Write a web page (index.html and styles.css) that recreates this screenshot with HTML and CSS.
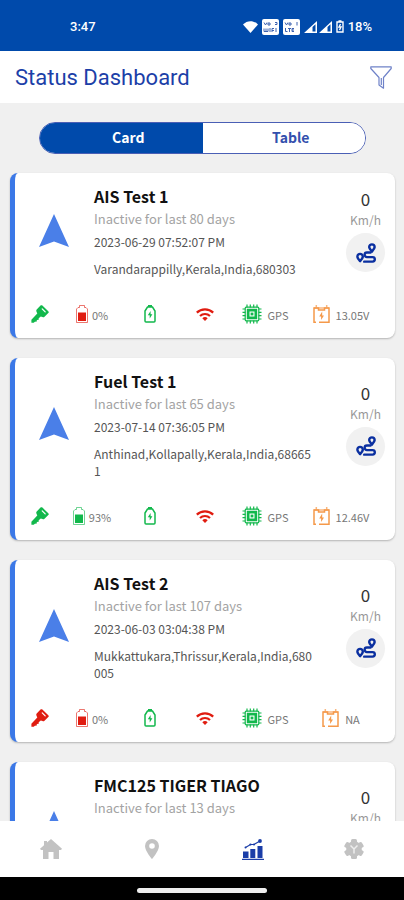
FILE: index.html
```html
<!DOCTYPE html>
<html lang="en">
<head>
  <meta charset="UTF-8">
  <meta name="viewport" content="width=device-width, initial-scale=1.0">
  <title>Status Dashboard</title>
  <link rel="stylesheet" href="styles.css">
</head>
<body>
  <!-- Shared icons -->
  <svg class="sprite" aria-hidden="true">
    <symbol id="arrow" viewBox="0 0 30 33">
      <path fill="#4a7fe8" d="M15 0 30 33 15 27.500 0 33z"/>
    </symbol>
    <symbol id="route" viewBox="0 0 22 22">
      <g fill="none" stroke="#0a2fa0" stroke-width="2.600" stroke-linecap="round" stroke-linejoin="round">
        <path d="M16 10.500h-4a2.500 2.500 0 0 0 0 5h6.200a2.500 2.500 0 0 1 0 5H9"/>
        <path d="M17.500 9.500c-2-2.400-3-3.600-3-5a3 3 0 0 1 6 0c0 1.400-1 2.600-3 5z"/>
        <path d="M4.500 20c-2-2.400-3-3.600-3-5a3 3 0 0 1 6 0c0 1.400-1 2.600-3 5z"/>
      </g>
    </symbol>
    <symbol id="key" viewBox="0 0 18 18">
      <path fill="currentColor" d="M9.500.6c.6-.5 1.300-.5 1.900 0l5.900 5.600c.6.600.6 1.300 0 1.900l-3.800 3.700c-.6.600-1.300.7-2 .3L9.800 11.400 7.700 13.300v1.400l-1.900.2v1.700l-1.900.1L2.700 17.700H.4v-3L6.300 8.500l-.9-2.100c-.3-.7-.2-1.400.3-1.900z"/>
      <path stroke="#fff" stroke-width="1.200" stroke-linecap="round" d="m11.200 3.800 3 3"/>
    </symbol>
    <symbol id="fuel" viewBox="0 0 12 18">
      <path fill="none" stroke="currentColor" opacity=".6" d="M3.500 2.500v-2h5v2h1.500l1.500 1.500v13.500H.5V4L2 2.500z"/>
      <path fill="currentColor" d="M2 7.500h8V16H2z"/>
    </symbol>
    <symbol id="charge" viewBox="0 0 12 18">
      <path fill="none" stroke="currentColor" stroke-width="1.500" d="M1 6 3.500 2h5L11 6v10a1 1 0 0 1-1 1H2a1 1 0 0 1-1-1z"/>
      <path fill="currentColor" d="M4 0h4v2H4zM6.600 6 3.800 10.300h1.900v3.200l2.700-4.200H6.600z"/>
    </symbol>
    <symbol id="wifi" viewBox="0 0 18 13">
      <g fill="none" stroke="currentColor" stroke-width="2.200">
        <path d="M.8 4.600a11.800 11.800 0 0 1 16.400 0"/>
        <path d="M4 8a7.200 7.200 0 0 1 10 0"/>
      </g>
      <path fill="currentColor" d="M6.300 10.200a3.900 3.900 0 0 1 5.400 0L9 13z"/>
    </symbol>
    <symbol id="chip" viewBox="0 0 20 20">
      <path stroke="currentColor" stroke-width="1.200" d="M5 .5v3M8.300.5v3M11.700.5v3M15 .5v3M5 16.500v3M8.300 16.500v3M11.700 16.500v3M15 16.500v3M.5 5h3M.5 8.300h3M.5 11.700h3M.5 15h3M16.500 5h3M16.500 8.300h3M16.500 11.700h3M16.500 15h3"/>
      <rect x="3.200" y="3.200" width="13.600" height="13.600" rx="1" fill="none" stroke="currentColor" stroke-width="1.200"/>
      <path fill="currentColor" fill-rule="evenodd" d="M4.800 4.800h10.400v10.400H4.800zM7.500 7.500v5h5v-5z"/>
      <path fill="currentColor" d="M8.600 8.600h2.800v2.800H8.600z"/>
    </symbol>
    <symbol id="volt" viewBox="0 0 17 18">
      <g fill="none" stroke="currentColor" stroke-width="1.500">
        <path d="M3 17.200H1V3h4.500v2h6V3H16v14.200H6"/>
        <path d="M3.300 0v3M13.700 0v3M1 3h15" opacity=".7"/>
      </g>
      <path fill="currentColor" d="M9.200 6.500 6.200 11.500h1.900V15L11 10.500H9.200z"/>
    </symbol>
  </svg>

  <div class="status-bar">
    <span>3:47</span>
    <div class="status-icons">
      <svg width="15" height="12" viewBox="0 0 15 12"><path fill="#fff" d="M7.500 12 0 3.500C4-1 11-1 15 3.500z"/></svg>
      <svg width="17" height="16" viewBox="0 0 17 16">
        <rect width="17" height="16" rx="2" fill="#fff"/>
        <path fill="none" stroke="#3d62b0" d="M2 3.500l1.500 2.500L5 3.500M6 4h2v2H6zM13 3.500h2v2h-2M2 9.500v3h2v-3M4 12.500h2v-3M8 9v4M10 13V9.500h2M10 11.500h2M14 9v4"/>
      </svg>
      <svg width="17" height="16" viewBox="0 0 17 16">
        <rect width="17" height="16" rx="2" fill="#fff"/>
        <path fill="none" stroke="#3d62b0" d="M2 3.500l1.500 2.500L5 3.500M6 4h2v2H6zM14 3v3.500M2.500 9v3.500h2M5 9.500h3M6.500 9.500v3.500M11 9.500H9v3h2M9 11h2"/>
      </svg>
      <div class="signal">
        <svg width="13" height="12" viewBox="0 0 13 12"><path fill="#fff" fill-rule="evenodd" d="M0 12 13 0v12zM8.500 6v4.500h3V3.200z"/></svg>
        <svg width="13" height="12" viewBox="0 0 13 12"><path fill="#fff" fill-rule="evenodd" d="M0 12 13 0v12zM8.500 6v4.500h3V3.200z"/></svg>
      </div>
      <svg width="8" height="13" viewBox="0 0 8 13"><path fill="none" stroke="#fff" stroke-width="1.400" d="M1 2h6v10H1zM2.500 1h3M4.500 4 3 7h2L3.500 10"/></svg>
      <span>18%</span>
    </div>
  </div>

  <header class="header">
    <h1>Status Dashboard</h1>
    <button type="button" class="filter-button" aria-label="Filter">
      <svg width="22" height="23" viewBox="0 0 22 23"><path fill="none" stroke="#6f82c8" stroke-width="1.200" stroke-linejoin="round" d="M.8.8h20.400v1.700L13.500 11.500v10.700L9 19v-7.500L.8 2.500zM11.300 12v7"/></svg>
    </button>
  </header>

  <main class="content">
    <div class="view-switch">
      <button type="button" class="active">Card</button>
      <button type="button">Table</button>
    </div>

    <section class="card">
      <div class="card-main">
        <svg class="arrow"><use href="#arrow"/></svg>
        <div class="details">
          <h2>AIS Test 1</h2>
          <p class="inactive">Inactive for last 80 days</p>
          <p class="date">2023-06-29 07:52:07 PM</p>
          <p class="address">Varandarappilly,Kerala,India,680303</p>
        </div>
        <div class="speed">
          <span class="value">0</span>
          <span class="unit">Km/h</span>
          <button type="button" class="route-button" aria-label="Route"><svg><use href="#route"/></svg></button>
        </div>
      </div>
      <div class="sensors">
        <div class="green"><svg class="key"><use href="#key"/></svg></div>
        <div class="red"><svg class="battery"><use href="#fuel"/></svg><span>0%</span></div>
        <div class="green"><svg class="battery"><use href="#charge"/></svg></div>
        <div class="red"><svg class="wifi"><use href="#wifi"/></svg></div>
        <div class="green wide"><svg class="chip"><use href="#chip"/></svg><span>GPS</span></div>
        <div class="orange wide"><svg class="volt"><use href="#volt"/></svg><span>13.05V</span></div>
      </div>
    </section>

    <section class="card">
      <div class="card-main">
        <svg class="arrow"><use href="#arrow"/></svg>
        <div class="details">
          <h2>Fuel Test 1</h2>
          <p class="inactive">Inactive for last 65 days</p>
          <p class="date">2023-07-14 07:36:05 PM</p>
          <p class="address">Anthinad,Kollapally,Kerala,India,686651</p>
        </div>
        <div class="speed">
          <span class="value">0</span>
          <span class="unit">Km/h</span>
          <button type="button" class="route-button" aria-label="Route"><svg><use href="#route"/></svg></button>
        </div>
      </div>
      <div class="sensors">
        <div class="green"><svg class="key"><use href="#key"/></svg></div>
        <div class="green"><svg class="battery"><use href="#fuel"/></svg><span>93%</span></div>
        <div class="green"><svg class="battery"><use href="#charge"/></svg></div>
        <div class="red"><svg class="wifi"><use href="#wifi"/></svg></div>
        <div class="green wide"><svg class="chip"><use href="#chip"/></svg><span>GPS</span></div>
        <div class="orange wide"><svg class="volt"><use href="#volt"/></svg><span>12.46V</span></div>
      </div>
    </section>

    <section class="card">
      <div class="card-main">
        <svg class="arrow"><use href="#arrow"/></svg>
        <div class="details">
          <h2>AIS Test 2</h2>
          <p class="inactive">Inactive for last 107 days</p>
          <p class="date">2023-06-03 03:04:38 PM</p>
          <p class="address">Mukkattukara,Thrissur,Kerala,India,680005</p>
        </div>
        <div class="speed">
          <span class="value">0</span>
          <span class="unit">Km/h</span>
          <button type="button" class="route-button" aria-label="Route"><svg><use href="#route"/></svg></button>
        </div>
      </div>
      <div class="sensors">
        <div class="red"><svg class="key"><use href="#key"/></svg></div>
        <div class="red"><svg class="battery"><use href="#fuel"/></svg><span>0%</span></div>
        <div class="green"><svg class="battery"><use href="#charge"/></svg></div>
        <div class="red"><svg class="wifi"><use href="#wifi"/></svg></div>
        <div class="green wide"><svg class="chip"><use href="#chip"/></svg><span>GPS</span></div>
        <div class="orange wide"><svg class="volt"><use href="#volt"/></svg><span>NA</span></div>
      </div>
    </section>

    <section class="card">
      <div class="card-main tall">
        <svg class="arrow"><use href="#arrow"/></svg>
        <div class="details">
          <h2>FMC125 TIGER TIAGO</h2>
          <p class="inactive">Inactive for last 13 days</p>
        </div>
        <div class="speed">
          <span class="value">0</span>
          <span class="unit">Km/h</span>
          <button type="button" class="route-button" aria-label="Route"><svg><use href="#route"/></svg></button>
        </div>
      </div>
    </section>
  </main>

  <nav class="tab-bar">
    <a href="#home" aria-label="Home">
      <svg width="22" height="20" viewBox="0 0 22 20"><path fill="#c2c2c2" d="M11 0 22 9.800l-1 1.200h-2v9h-5.500v-7h-5v7H3v-9H1L0 9.800 4 6.200V2h3v1.600z"/></svg>
    </a>
    <a href="#map" aria-label="Map">
      <svg width="14" height="20" viewBox="0 0 14 20"><path fill="#c2c2c2" fill-rule="evenodd" d="M7 0a7 7 0 0 1 7 7c0 5-7 13-7 13S0 12 0 7a7 7 0 0 1 7-7zm0 4.200a2.800 2.800 0 1 0 0 5.600 2.800 2.800 0 0 0 0-5.600z"/></svg>
    </a>
    <a href="#status" aria-label="Status">
      <svg width="22" height="21" viewBox="0 0 22 21">
        <path fill="#1a3da8" d="M1 12.500h5.500V19H1zM8.300 10h5v9h-5zM15.500 7h5v12h-5zM0 19.800h22V21H0z"/>
        <path fill="none" stroke="#1a3da8" stroke-width="1.200" d="m3.500 8.500 5-3L12 5.500l6-3.500"/>
        <g fill="#1a3da8"><circle cx="3.500" cy="8.500" r="1"/><circle cx="8.500" cy="5.500" r="1.100"/><circle cx="12" cy="5.500" r="1.100"/><circle cx="18" cy="2" r="1.900"/></g>
      </svg>
    </a>
    <a href="#settings" aria-label="Settings">
      <svg width="20" height="20" viewBox="0 0 20 20">
        <g fill="#c2c2c2">
          <circle cx="10" cy="10" r="7.800"/>
          <rect x="7" y="0" width="6" height="20" rx="1.500"/>
          <rect x="7" y="0" width="6" height="20" rx="1.500" transform="rotate(60 10 10)"/>
          <rect x="7" y="0" width="6" height="20" rx="1.500" transform="rotate(120 10 10)"/>
        </g>
        <path fill="none" stroke="#eee" stroke-width="1.500" d="M6.500 6.500 10 10l3.500-3.500M10 10v4.500"/>
      </svg>
    </a>
  </nav>
  <div class="gesture-bar"><span></span></div>
</body>
</html>
```
FILE: styles.css
```css
* {
  box-sizing: border-box;
}

body {
  display: flex;
  flex-direction: column;
  height: 100vh;
  margin: 0;
  background-color: #f0f0f0;
  font-family: "Noto Sans CJK SC", "Open Sans", sans-serif;
  overflow: hidden;
}

h1, h2, p {
  margin: 0;
}

button {
  border: none;
  padding: 0;
  font-family: inherit;
  cursor: pointer;
}

svg {
  display: block;
  flex-shrink: 0;
}

.sprite {
  position: absolute;
  width: 0;
  height: 0;
}

.status-bar {
  display: flex;
  flex-shrink: 0;
  justify-content: space-between;
  align-items: center;
  height: 51px;
  padding: 2px 32px 0 70px;
  background-color: #004aab;
  color: #fff;
  font: 500 13px/16px Roboto, sans-serif;
}

.status-icons {
  display: flex;
  align-items: center;
  gap: 4px;
}

.signal {
  display: flex;
  gap: 2px;
}

.header {
  display: flex;
  flex-shrink: 0;
  justify-content: space-between;
  align-items: center;
  height: 52px;
  padding: 0 12px 0 15px;
  background-color: #fff;
}

.header h1 {
  padding-top: 2px;
  color: #1c3fa8;
  font: 400 22px/28px Roboto, sans-serif;
}

.filter-button {
  background: none;
}

.content {
  flex: 1;
  min-height: 0;
  padding: 19px 9px 0 10px;
  overflow: hidden;
}

.view-switch {
  display: flex;
  height: 32px;
  margin: 0 29px 19px;
  border: 1px solid #4a5fb5;
  border-radius: 16px;
  background-color: #fff;
  overflow: hidden;
}

.view-switch button {
  flex: 1;
  padding: 0 0 2px 14px;
  background-color: #fff;
  color: #3350ad;
  font-size: 14px;
  font-weight: bold;
  line-height: 20px;
}

.view-switch .active {
  background-color: #004aab;
  color: #fff;
}

.card {
  margin-bottom: 20px;
  padding-bottom: 10px;
  border-left: 5px solid #3b78e7;
  border-radius: 8px;
  background-color: #fff;
  box-shadow: 0 1px 2px rgba(0, 0, 0, 0.25);
}

.card-main {
  display: grid;
  grid-template-columns: 79px 1fr 59px;
  align-items: center;
  min-height: 114px;
}

.card-main.tall {
  min-height: 131px;
}

.arrow {
  width: 30px;
  height: 33px;
  margin-left: 24px;
}

.details {
  align-self: start;
  padding: 11px 22px 10px 0;
}

.details h2 {
  color: #111;
  font-size: 16px;
  line-height: 24px;
}

.inactive {
  color: #a3a3a3;
  font-size: 13px;
  line-height: 22px;
}

.date {
  color: #555;
  font-size: 12px;
  line-height: 24px;
}

.address {
  margin-top: 6px;
  color: #555;
  font-size: 12px;
  line-height: 17px;
  word-break: break-all;
}

.speed {
  display: flex;
  flex-direction: column;
  align-items: center;
}

.value {
  color: #333;
  font-size: 17px;
  line-height: 22px;
}

.unit {
  color: #999;
  font-size: 12px;
  line-height: 20px;
}

.route-button {
  display: flex;
  justify-content: center;
  align-items: center;
  width: 39px;
  height: 39px;
  margin-top: 3px;
  border-radius: 50%;
  background-color: #f1f1f1;
}

.route-button svg {
  width: 20px;
  height: 20px;
}

.sensors {
  display: grid;
  grid-template-columns: 49fr 56fr 60fr 50fr 70fr 82fr;
  height: 28px;
  margin-top: 13px;
  padding-right: 13px;
}

.sensors div {
  display: flex;
  justify-content: center;
  align-items: center;
  gap: 4px;
}

.sensors .wide {
  gap: 6px;
}

.sensors span {
  padding-top: 2px;
  color: #777;
  font-size: 11px;
  line-height: 16px;
}

.green {
  color: #12b84c;
}

.red {
  color: #e01c10;
}

.orange {
  color: #f5994a;
}

.key {
  width: 18px;
  height: 18px;
}

.battery {
  width: 12px;
  height: 18px;
}

.wifi {
  width: 18px;
  height: 13px;
}

.chip {
  width: 20px;
  height: 20px;
}

.volt {
  width: 17px;
  height: 18px;
}

.tab-bar {
  display: flex;
  flex-shrink: 0;
  height: 56px;
  background-color: #fff;
}

.tab-bar a {
  display: flex;
  flex: 1;
  justify-content: center;
  align-items: center;
}

.gesture-bar {
  display: flex;
  flex-shrink: 0;
  justify-content: center;
  align-items: center;
  height: 23px;
  padding-top: 3px;
  background-color: #000;
}

.gesture-bar span {
  width: 130px;
  height: 5px;
  border-radius: 3px;
  background-color: #eee;
}
```
